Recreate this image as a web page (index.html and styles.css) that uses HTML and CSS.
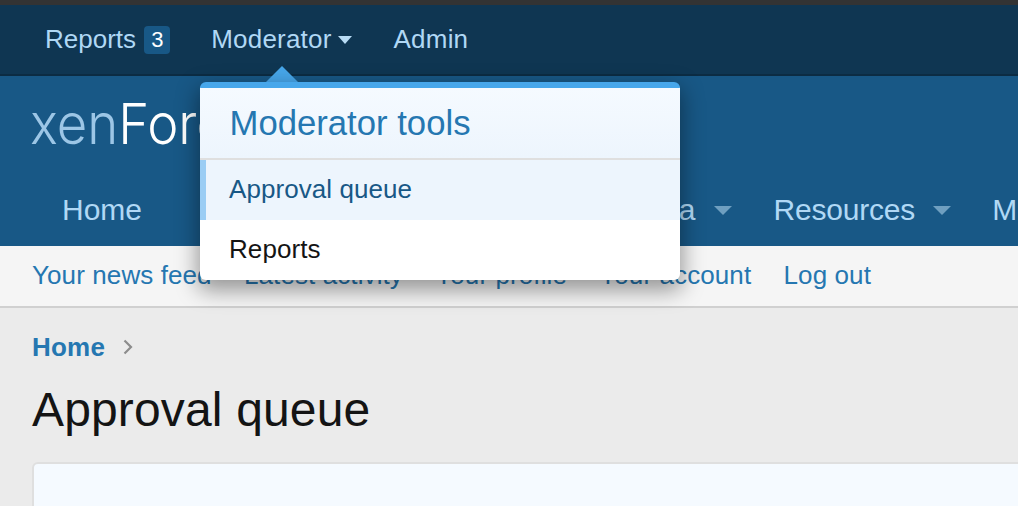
FILE: index.html
```html
<!DOCTYPE html>
<html lang="en">
<head>
<meta charset="utf-8">
<title>Approval queue</title>
<link rel="stylesheet" href="styles.css">
</head>
<body>
<div class="page">
  <div class="strip"></div>
  <div class="topbar">
    <a class="top-link top-reports">Reports <span class="badge">3</span></a>
    <a class="top-link top-open">Moderator<span class="top-caret"></span></a>
    <a class="top-link">Admin</a>
  </div>
  <div class="menu-wrap">
    <div class="menu-arrow"></div>
    <div class="menu">
      <div class="menu-head">Moderator tools</div>
      <a class="menu-item menu-item-active">Approval queue</a>
      <a class="menu-item">Reports</a>
    </div>
  </div>
  <header class="header">
    <div class="logo"><span class="logo-text"><span class="logo-a">xen</span><span class="logo-b">Foro</span></span></div>
    <nav class="nav">
      <a class="nav-item nav-plain">Home</a>
      <a class="nav-item">Forums<span class="nav-caret"></span></a>
      <a class="nav-item">What's new<span class="nav-caret"></span></a>
      <a class="nav-item">Media<span class="nav-caret"></span></a>
      <a class="nav-item nav-tight">Resources<span class="nav-caret"></span></a>
      <a class="nav-item">Members<span class="nav-caret"></span></a>
    </nav>
  </header>
  <div class="subnav">
    <a class="sub-link">Your news feed</a>
    <a class="sub-link">Latest activity</a>
    <a class="sub-link">Your profile</a>
    <a class="sub-link">Your account</a>
    <a class="sub-link">Log out</a>
  </div>
  <main class="content">
    <div class="crumbs"><a class="crumb">Home</a>
      <svg class="crumb-sep" width="10" height="16" viewBox="0 0 10 16"><path d="M1.500 1.500 8 8l-6.500 6.500" fill="none" stroke="#8c8c8c" stroke-width="2.200"/></svg>
    </div>
    <h1 class="title">Approval queue</h1>
    <div class="card"></div>
  </main>
</div>
</body>
</html>
```

FILE: styles.css
```css
html, body { margin: 0; padding: 0; height: 506px; overflow: hidden; }
body { background: #ebebeb; font-family: "Liberation Sans", Arial, sans-serif; color: #141414; }
a { color: inherit; text-decoration: none; }
.page { width: 2036px; position: relative; }

.strip { height: 5px; background: #333333; }
.topbar { height: 69px; background: #0f3652; border-bottom: 2px solid #0c2c43; display: flex; align-items: center; padding-left: 32px; color: #b0d8f5; font-size: 26px; letter-spacing: .2px; }
.top-link { padding: 0 13px; margin-right: 16px; display: flex; align-items: center; white-space: pre; }
.top-reports { letter-spacing: 0; }
.badge { display: inline-block; width: 26px; height: 28px; line-height: 28px; margin: 0 -1px 0 1px; text-align: center; background: #185886; border-radius: 4px; color: #fff; font-size: 22px; letter-spacing: 0; }
.top-caret { width: 0; height: 0; margin-left: 6px; border-left: 7.500px solid transparent; border-right: 7.500px solid transparent; border-top: 8px solid #b8dcf5; }

.menu-wrap { position: absolute; left: 200px; top: 66px; width: 480px; z-index: 5; }
.menu-arrow { width: 0; height: 0; margin-left: 66px; border-left: 16px solid transparent; border-right: 16px solid transparent; border-bottom: 16px solid #47a7eb; }
.menu { border-top: 6px solid #47a7eb; border-radius: 6px; background: #fff; box-shadow: 0 8px 22px 2px rgba(0,0,0,.4); overflow: hidden; }
.menu-head { height: 70px; line-height: 70px; padding-left: 29.500px; font-size: 34.700px; color: #2577b1; background: linear-gradient(#f5faff, #edf5fd); border-bottom: 2px solid #dfdfdf; }
.menu-item { display: block; height: 60px; line-height: 58px; padding-left: 29px; font-size: 26px; letter-spacing: .07px; color: #141414; }
.menu-item-active { padding-left: 23px; border-left: 6px solid #9bcdf4; background: #edf5fd; color: #185886; }

.header { height: 170px; background: #185886; display: flex; flex-direction: column; }
.logo { height: 100px; padding: 0 0 0 30px; box-sizing: border-box; font-family: Inter, sans-serif; font-weight: 300; font-size: 56px; line-height: 100px; white-space: nowrap; }
.logo-text { display: inline-block; transform: scaleX(.94); transform-origin: left center; position: relative; top: -2px; }
.logo-a { color: #9cc6e6; }
.logo-b { color: #fff; }
.nav { display: flex; padding-left: 32px; color: #b0d8f5; font-size: 30px; }
.nav-item { display: flex; align-items: center; height: 68px; padding: 0 12px 2px 30px; white-space: nowrap; }
.nav-plain { padding-right: 30px; }
.nav-tight { letter-spacing: -.2px; padding-right: 11px; }
.nav-caret { width: 0; height: 0; margin-left: 18px; border-left: 9px solid transparent; border-right: 9px solid transparent; border-top: 9px solid #6f9fc0; }

.subnav { height: 58px; padding-bottom: 2px; background: #f5f5f5; border-bottom: 2px solid #d0d0d0; display: flex; align-items: center; padding-left: 32px; font-size: 26px; letter-spacing: .1px; color: #2577b1; gap: 32.250px; }
.sub-link { white-space: nowrap; }

.content { padding: 0 32px; }
.crumbs { display: flex; align-items: center; height: 78px; font-size: 26px; font-weight: 700; letter-spacing: .2px; color: #2577b1; }
.crumb-sep { margin-left: 18px; }
.title { margin: 0; font-size: 48px; font-weight: 400; line-height: 48px; letter-spacing: .15px; color: #141414; }
.card { margin-top: 28px; height: 300px; border: 2px solid #dfdfdf; border-radius: 6px; background: #f5faff; }
```
